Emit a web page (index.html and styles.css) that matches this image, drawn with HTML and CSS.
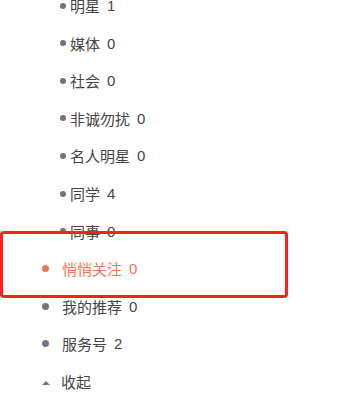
FILE: index.html
```html
<!DOCTYPE html>
<html lang="zh-CN">
<head>
    <meta charset="UTF-8">
    <meta name="viewport" content="width=device-width, initial-scale=1.0">
    <title>分组</title>
    <link rel="stylesheet" href="styles.css">
</head>
<body>

<div class="group-menu">
    <ul class="sub-list">
        <li><span class="dot"></span>明星<span class="count">1</span></li>
        <li><span class="dot"></span>媒体<span class="count">0</span></li>
        <li><span class="dot"></span>社会<span class="count">0</span></li>
        <li><span class="dot"></span>非诚勿扰<span class="count">0</span></li>
        <li><span class="dot"></span>名人明星<span class="count">0</span></li>
        <li><span class="dot"></span>同学<span class="count">4</span></li>
        <li><span class="dot"></span>同事<span class="count">0</span></li>
    </ul>
    <ul class="top-list">
        <li class="active"><span class="dot"></span>悄悄关注<span class="count">0</span></li>
        <li><span class="dot"></span>我的推荐<span class="count">0</span></li>
        <li><span class="dot"></span>服务号<span class="count">2</span></li>
        <li class="toggle"><span class="arrow"></span>收起</li>
    </ul>
</div>

<!-- annotation box -->
<div class="highlight"></div>

</body>
</html>
```

FILE: styles.css
```css
body {
    margin: 0;
    font-family: "Liberation Sans", "Noto Sans CJK SC", sans-serif;
    font-size: 15px;
    color: #454545;
    background-color: #fff;
    overflow: hidden;
}
.group-menu {
    margin-top: -13px;
}
.group-menu ul {
    list-style: none;
    margin: 0;
    padding: 0;
}
.group-menu li {
    height: 37.56px;
    display: flex;
    align-items: center;
}
.count {
    margin-left: 7px;
}
.sub-list li {
    padding-left: 60px;
}
.sub-list .dot {
    width: 6px;
    height: 6px;
    border-radius: 50%;
    background-color: #6f7380;
    margin-right: 4px;
}
.top-list li {
    padding-left: 42px;
}
.top-list .dot {
    width: 7px;
    height: 7px;
    border-radius: 50%;
    background-color: #6f7380;
    margin-right: 13px;
}
.top-list li.active {
    color: #ef7651;
}
.top-list li.active .dot {
    background-color: #ef7651;
}
.arrow {
    width: 0;
    height: 0;
    border-left: 4px solid transparent;
    border-right: 4px solid transparent;
    border-bottom: 4px solid #6f7380;
    margin-right: 11px;
    margin-top: 3px;
}
.highlight {
    position: absolute;
    left: 0;
    top: 231px;
    width: 282px;
    height: 61px;
    border: 3px solid #ff1f1f;
    border-radius: 4px;
}
```
